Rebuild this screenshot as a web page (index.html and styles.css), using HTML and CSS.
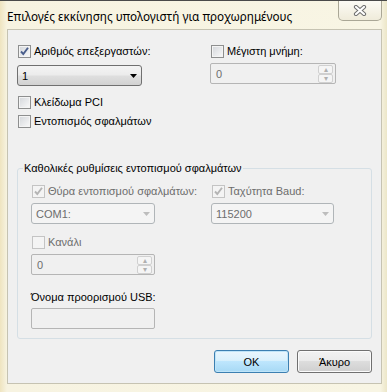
FILE: index.html
```html
<!DOCTYPE html>
<html lang="el">
<head>
  <meta charset="UTF-8" />
  <meta name="viewport" content="width=device-width, initial-scale=1.0" />
  <title>Επιλογές εκκίνησης υπολογιστή για προχωρημένους</title>
  <link rel="stylesheet" href="styles.css">
</head>
<body>
  <div class="window">
    <div class="titlebar">
      <span class="title">Επιλογές εκκίνησης υπολογιστή για προχωρημένους</span>
      <div class="close">
        <svg width="14" height="11" viewBox="0 0 14 11">
          <path d="M3 2 L11 9 M11 2 L3 9" stroke="#6f6f6f" stroke-width="4.2" stroke-linecap="round"/>
          <path d="M3 2 L11 9 M11 2 L3 9" stroke="#ffffff" stroke-width="2.2" stroke-linecap="round"/>
        </svg>
      </div>
    </div>

    <div class="client">
      <div class="top">
        <div class="col">
          <div class="check-row">
            <span class="box"><svg width="11" height="11" viewBox="0 0 11 11"><path d="M2 5.5 L4.3 8 L9 1.8" fill="none" stroke="#4a5e8c" stroke-width="1.9"/></svg></span>
            Αριθμός επεξεργαστών:
          </div>
          <div class="combo cpu">
            <span>1</span>
            <svg class="arrow" width="7" height="4" viewBox="0 0 7 4"><polygon points="0,0 7,0 3.5,4" fill="#000"/></svg>
          </div>
          <div class="check-row pci"><span class="box"></span>Κλείδωμα PCI</div>
          <div class="check-row debug"><span class="box"></span>Εντοπισμός σφαλμάτων</div>
        </div>
        <div class="col">
          <div class="check-row"><span class="box"></span>Μέγιστη μνήμη:</div>
          <div class="spin mem">
            <span>0</span>
            <span class="spin-btns"><span class="spin-btn">&#9652;</span><span class="spin-btn">&#9662;</span></span>
          </div>
        </div>
      </div>

      <fieldset class="group">
        <legend>Καθολικές ρυθμίσεις εντοπισμού σφαλμάτων</legend>
        <div class="group-body">
          <div class="group-top">
            <div class="check-row off">
              <span class="box off"><svg width="11" height="11" viewBox="0 0 11 11"><path d="M2 5.5 L4.3 8 L9 1.8" fill="none" stroke="#b4b4b4" stroke-width="1.9"/></svg></span>
              Θύρα εντοπισμού σφαλμάτων:
            </div>
            <div class="check-row off">
              <span class="box off"><svg width="11" height="11" viewBox="0 0 11 11"><path d="M2 5.5 L4.3 8 L9 1.8" fill="none" stroke="#b4b4b4" stroke-width="1.9"/></svg></span>
              Ταχύτητα Baud:
            </div>
            <div class="combo off">
              <span>COM1:</span>
              <svg class="arrow" width="7" height="4" viewBox="0 0 7 4"><polygon points="0,0 7,0 3.5,4" fill="#bdbdbd"/></svg>
            </div>
            <div class="combo off baud">
              <span>115200</span>
              <svg class="arrow" width="7" height="4" viewBox="0 0 7 4"><polygon points="0,0 7,0 3.5,4" fill="#bdbdbd"/></svg>
            </div>
          </div>
          <div class="check-row off channel"><span class="box off"></span>Κανάλι</div>
          <div class="spin channel-spin">
            <span>0</span>
            <span class="spin-btns"><span class="spin-btn">&#9652;</span><span class="spin-btn">&#9662;</span></span>
          </div>
          <div class="usb-label">Όνομα προορισμού USB:</div>
          <div class="textbox"></div>
        </div>
      </fieldset>

      <div class="buttons">
        <button class="btn default">OK</button>
        <button class="btn">Άκυρο</button>
      </div>
    </div>
  </div>
</body>
</html>
```

FILE: styles.css
```css
body {
  margin: 0;
  font-family: "Liberation Sans", Arial, sans-serif;
  font-size: 11px;
  color: #000;
}
.window {
  width: 387px;
  height: 392px;
  box-sizing: border-box;
  border-top: 1px solid #4a4a4a;
  padding: 0 5px 8px 7px;
  background: linear-gradient(90deg, #efe4c0 0px, #f7f3e1 7px, #f8f5e4 380px, #ece6c8 387px);
  display: flex;
  flex-direction: column;
}
.titlebar {
  height: 28px;
  display: flex;
  justify-content: space-between;
  align-items: flex-start;
}
.title {
  margin-top: 7px;
  font-family: "Noto Sans", sans-serif;
  font-size: 11.7px;
  line-height: 16px;
}
.close {
  width: 44px;
  height: 20px;
  box-sizing: border-box;
  border: 1px solid #aaa796;
  border-top: none;
  border-radius: 0 0 5px 5px;
  background: linear-gradient(#fcfbf5, #efebda);
  display: flex;
  align-items: center;
  justify-content: center;
}
.client {
  flex: 1;
  background: #f0f0f0;
  border: 1px solid #c6c3b2;
  padding: 13px 9px 10px 9px;
  display: flex;
  flex-direction: column;
}
.top {
  display: grid;
  grid-template-columns: 193px 1fr;
}
.check-row {
  display: flex;
  align-items: center;
  gap: 3px;
  height: 16px;
  line-height: 16px;
  white-space: nowrap;
}
.check-row.off {
  color: #6d6d6d;
}
.box {
  width: 13px;
  height: 13px;
  box-sizing: border-box;
  margin-left: 1px;
  border: 1px solid #8e8f8f;
  background: linear-gradient(135deg, #d3d6da, #fafafa);
  box-shadow: inset 0 0 0 1px #f4f4f4;
  display: flex;
  align-items: center;
  justify-content: center;
}
.box.off {
  border-color: #c4c4c4;
  background: #f4f4f4;
  box-shadow: none;
}
.pci {
  margin-top: 8px;
}
.debug {
  margin-top: 3px;
}
.combo {
  width: 125px;
  height: 21px;
  box-sizing: border-box;
  border: 1px solid #707070;
  border-radius: 3px;
  background: linear-gradient(#f4f4f4 0%, #ececec 45%, #dedede 55%, #d2d2d2 100%);
  display: flex;
  align-items: center;
  justify-content: space-between;
  padding: 0 4px 0 4px;
  margin-top: 4px;
}
.combo.cpu {
  margin-top: 6px;
}
.combo.off {
  width: 124px;
  border-color: #b0b5b8;
  background: #f4f4f4;
  color: #6d6d6d;
}
.combo.baud {
  width: 123px;
}
.spin {
  width: 126px;
  height: 21px;
  box-sizing: border-box;
  border: 1px solid #b5b5b5;
  border-radius: 2px;
  background: #f0f0f0;
  color: #6d6d6d;
  display: flex;
  align-items: center;
  justify-content: space-between;
  padding: 0 2px 0 5px;
}
.spin.mem {
  margin-top: 4px;
}
.spin.channel-spin {
  width: 124px;
  margin-top: 4px;
}
.spin-btns {
  display: flex;
  flex-direction: column;
}
.spin-btn {
  width: 15px;
  height: 9px;
  box-sizing: border-box;
  border: 1px solid #d0d0d0;
  border-radius: 2px;
  background: #f5f5f5;
  color: #b0b0b0;
  font-size: 8px;
  line-height: 7px;
  text-align: center;
}
.group {
  margin: 31px 0 0 0;
  padding: 7px 0 9px 5px;
  border: 1px solid #d5dfe5;
  border-radius: 3px;
  min-width: 0;
}
.group legend {
  padding: 0 1px;
  line-height: 16px;
}
.group-body {
  margin-left: 8px;
}
.group-top {
  display: grid;
  grid-template-columns: 180px 1fr;
}
.channel {
  margin-top: 10px;
}
.usb-label {
  margin-top: 14px;
  line-height: 16px;
}
.textbox {
  width: 124px;
  height: 21px;
  box-sizing: border-box;
  margin-top: 3px;
  border: 1px solid #b5b5b5;
  border-radius: 2px;
  background: #f0f0f0;
}
.buttons {
  margin-top: auto;
  display: flex;
  justify-content: flex-end;
  gap: 8px;
}
.btn {
  width: 75px;
  height: 23px;
  box-sizing: border-box;
  padding: 0;
  font: inherit;
  color: #000;
  border: 1px solid #707070;
  border-radius: 3px;
  background: linear-gradient(#f2f2f2 0%, #ebebeb 45%, #dddddd 50%, #cfcfcf 100%);
  box-shadow: inset 0 0 0 1px #fbfbfb;
}
.btn.default {
  border-color: #3c7fb1;
  background: linear-gradient(#eaf6fd 0%, #d9f0fc 45%, #bee6fd 50%, #a7d9f5 100%);
  box-shadow: inset 0 0 0 1px #bfe4f8;
}
```
